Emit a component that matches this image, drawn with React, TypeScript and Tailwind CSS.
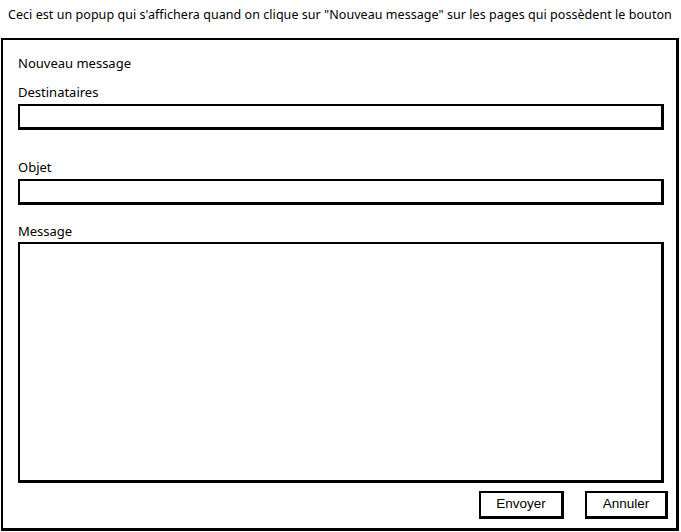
import React from "react";

const hand = { fontFamily: '"Noto Sans", "DejaVu Sans", sans-serif' };

export default function App() {
  return (
    <div className="w-[681px] h-[532px] bg-white relative overflow-hidden text-black" style={hand}>
      <div className="pt-[6px] pl-[8px] text-[12.5px] leading-[18px] tracking-[0.05px] whitespace-nowrap">
        Ceci est un popup qui s'affichera quand on clique sur "Nouveau message" sur les pages qui possèdent le bouton
      </div>
      <div className="mt-[14px] ml-[1px] w-[678px] h-[493px] border-2 border-black border-r-[3px] border-b-[3px] flex flex-col pl-[15px] pr-[12px]">
        <div className="mt-[14px] text-[13px] leading-[18px]">Nouveau message</div>
        <div className="mt-[11px] text-[13px] leading-[18px]">Destinataires</div>
        <div className="mt-[3px] h-[26px] border-2 border-black border-r-[3px] border-b-[3px]" />
        <div className="mt-[28px] text-[13px] leading-[18px]">Objet</div>
        <div className="mt-[3px] h-[26px] border-2 border-black border-r-[3px] border-b-[3px]" />
        <div className="mt-[17px] text-[13px] leading-[18px]">Message</div>
        <div className="mt-[2px] h-[241px] border-2 border-black border-r-[3px] border-b-[3px]" />
        <div className="mt-[8px] flex justify-end gap-[21px] -mr-[4px]">
          <button
            className="w-[85px] h-[28px] border-2 border-black border-r-[3px] border-b-[3px] text-[13.5px] bg-white"
            style={{ fontFamily: '"Liberation Sans", Arial, sans-serif' }}
          >
            Envoyer
          </button>
          <button
            className="w-[83px] h-[28px] border-2 border-black border-r-[3px] border-b-[3px] text-[13.5px] bg-white"
            style={{ fontFamily: '"Liberation Sans", Arial, sans-serif' }}
          >
            Annuler
          </button>
        </div>
      </div>
    </div>
  );
}
